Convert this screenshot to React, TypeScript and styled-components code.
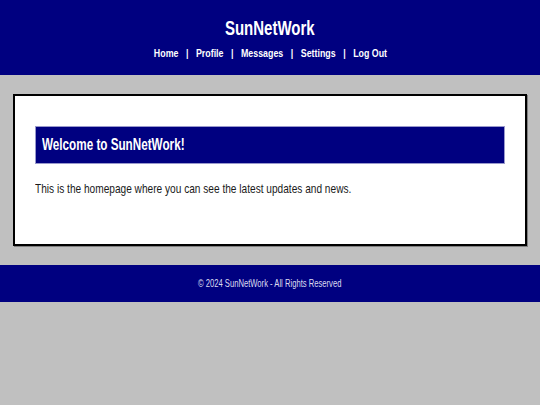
import { Fragment } from 'react';
import styled, { createGlobalStyle } from 'styled-components';

const GlobalStyle = createGlobalStyle`
  html, body {
    margin: 0;
    padding: 0;
    background-color: #c0c0c0;
    font-family: 'Liberation Sans', Arial, sans-serif;
  }
`;

// the reference type is narrow, so the text runs are squeezed sideways
const Squeeze = styled.span<{ $origin?: string }>`
  display: inline-block;
  white-space: nowrap;
  transform: scaleX(0.75);
  transform-origin: ${(p) => p.$origin || 'center'};
`;

const Header = styled.header`
  background-color: #000080;
  color: #ffffff;
  height: 75px;
  display: flex;
  flex-direction: column;
  align-items: center;
  padding-top: 16px;
  box-sizing: border-box;
`;

const Title = styled.h1`
  margin: 0;
  font-size: 20px;
  font-weight: bold;
  line-height: 24px;
`;

const Nav = styled.nav`
  display: flex;
  align-items: center;
  gap: 10px;
  margin-top: 6px;
  font-size: 11.8px;
  font-weight: bold;
  line-height: 14px;
`;

const NavLink = styled.a`
  color: #ffffff;
  text-decoration: none;
`;

const Main = styled.main`
  margin: 19px 13px;
  background-color: #ffffff;
  border: 2px solid #000000;
  box-shadow: 1px 1px 0 #808080;
  height: 152px;
  box-sizing: border-box;
  padding: 30px 20px 0;
`;

const Banner = styled.h2`
  margin: 0;
  background-color: #000080;
  color: #ffffff;
  border: 1px solid #9999cc;
  height: 38px;
  box-sizing: border-box;
  display: flex;
  align-items: center;
  padding-left: 6px;
  font-size: 15.6px;
  font-weight: bold;
`;

const Paragraph = styled.p`
  margin: 16px 0 0;
  font-size: 13.5px;
  line-height: 17px;
  color: #1a1a1a;
`;

const Footer = styled.footer`
  background-color: #000080;
  color: #dcdcf0;
  height: 37px;
  display: flex;
  align-items: center;
  justify-content: center;
  font-size: 10.2px;
`;

const links = ['Home', 'Profile', 'Messages', 'Settings', 'Log Out'];

export default function App() {
  return (
    <>
      <GlobalStyle />
      <Header>
        <Title>
          <Squeeze>SunNetWork</Squeeze>
        </Title>
        <Squeeze>
          <Nav>
            {links.map((l, i) => (
              <Fragment key={l}>
                {i > 0 && <span>|</span>}
                <NavLink href="#">{l}</NavLink>
              </Fragment>
            ))}
          </Nav>
        </Squeeze>
      </Header>
      <Main>
        <Banner>
          <Squeeze $origin="left">Welcome to SunNetWork!</Squeeze>
        </Banner>
        <Paragraph>
          <Squeeze $origin="left">
            This is the homepage where you can see the latest updates and news.
          </Squeeze>
        </Paragraph>
      </Main>
      <Footer>
        <Squeeze>© 2024 SunNetWork - All Rights Reserved</Squeeze>
      </Footer>
    </>
  );
}
